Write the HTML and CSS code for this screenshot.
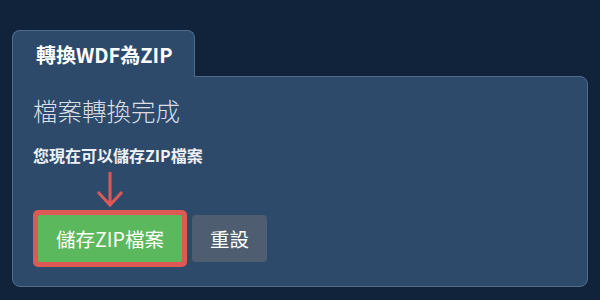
FILE: index.html
```html
<!DOCTYPE html>
<html lang="zh-Hant">
<head>
<meta charset="utf-8">
<link rel="stylesheet" href="styles.css">
</head>
<body>
<div class="wrap">
  <div class="tab">轉換WDF為ZIP</div>
  <div class="panel">
    <h2 class="title">檔案轉換完成</h2>
    <p class="msg">您現在可以儲存ZIP檔案</p>
    <div class="actions">
      <div class="save-col">
        <svg class="arrow" width="30" height="36" viewBox="0 0 30 36">
          <path d="M15 0 V33 M3 20 L15 33 L27 20" fill="none" stroke="#dd5955" stroke-width="3" stroke-linecap="butt" stroke-linejoin="miter"/>
        </svg>
        <div class="highlight"><button class="btn btn-save">儲存ZIP檔案</button></div>
      </div>
      <button class="btn btn-reset">重設</button>
    </div>
  </div>
</div>
</body>
</html>
```

FILE: styles.css
```css
* { box-sizing: border-box; }
html, body {
  margin: 0;
  height: 100%;
  background: #10233a;
  font-family: "Noto Sans CJK TC", "Noto Sans", sans-serif;
  color: #fff;
}
.wrap {
  padding: 30px 12px 0 12px;
}
.tab {
  position: relative;
  z-index: 1;
  width: 183px;
  height: 47px;
  margin-bottom: -1px;
  padding-left: 23px;
  background: #2d4a6b;
  border: 1px solid #4f6b8e;
  border-bottom: none;
  border-radius: 8px 8px 0 0;
  font-size: 20px;
  font-weight: 700;
  line-height: 48px;
  color: #fff;
}
.panel {
  width: 576px;
  height: 211px;
  background: #2d4a6b;
  border: 1px solid #4f6b8e;
  border-radius: 0 8px 8px 8px;
  padding: 18px 20px 0 20px;
}
.title {
  margin: 0;
  font-size: 24.5px;
  font-weight: 300;
  line-height: 32px;
  color: #dadfe6;
}
.msg {
  margin: 17px 0 0 0;
  font-size: 16px;
  font-weight: 700;
  line-height: 22px;
  color: #eef1f5;
}
.actions {
  display: flex;
  align-items: flex-end;
  gap: 5px;
  margin-top: 2px;
}
.save-col {
  display: flex;
  flex-direction: column;
  align-items: center;
}
.arrow {
  display: block;
  margin-top: 4px;
  margin-bottom: 2px;
}
.highlight {
  border: 5px solid #dd5955;
  border-radius: 5px;
  display: flex;
}
.btn {
  border: none;
  margin: 0;
  height: 47px;
  font-family: "Noto Sans CJK TC", "Noto Sans", sans-serif;
  font-size: 19.5px;
  color: #fff;
  cursor: pointer;
}
.btn-save {
  width: 144px;
  background: #5cb85c;
  border-radius: 1px;
}
.btn-reset {
  width: 75px;
  margin-bottom: 5px;
  background: #4e5e70;
  border-radius: 4px;
}
```
